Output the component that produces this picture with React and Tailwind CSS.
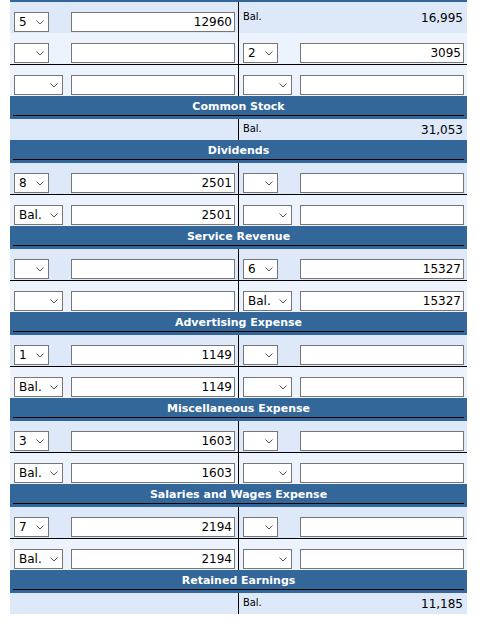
import { useState } from 'react';

const font = "font-['DejaVu_Sans',Verdana,sans-serif]";

const accounts = [
  {
    title: null,
    rows: [
      { left: { sel: '5', val: '12960' }, right: { bal: '16,995' } },
      { left: { sel: '', val: '' }, right: { sel: '2', val: '3095' } },
      { total: true, left: { sel: '', val: '' }, right: { sel: '', val: '' } },
    ],
  },
  { title: 'Common Stock', balance: '31,053' },
  {
    title: 'Dividends',
    rows: [
      { left: { sel: '8', val: '2501' }, right: { sel: '', val: '' } },
      { total: true, left: { sel: 'Bal.', val: '2501' }, right: { sel: '', val: '' } },
    ],
  },
  {
    title: 'Service Revenue',
    rows: [
      { left: { sel: '', val: '' }, right: { sel: '6', val: '15327' } },
      { total: true, left: { sel: '', val: '' }, right: { sel: 'Bal.', val: '15327' } },
    ],
  },
  {
    title: 'Advertising Expense',
    rows: [
      { left: { sel: '1', val: '1149' }, right: { sel: '', val: '' } },
      { total: true, left: { sel: 'Bal.', val: '1149' }, right: { sel: '', val: '' } },
    ],
  },
  {
    title: 'Miscellaneous Expense',
    rows: [
      { left: { sel: '3', val: '1603' }, right: { sel: '', val: '' } },
      { total: true, left: { sel: 'Bal.', val: '1603' }, right: { sel: '', val: '' } },
    ],
  },
  {
    title: 'Salaries and Wages Expense',
    rows: [
      { left: { sel: '7', val: '2194' }, right: { sel: '', val: '' } },
      { total: true, left: { sel: 'Bal.', val: '2194' }, right: { sel: '', val: '' } },
    ],
  },
  { title: 'Retained Earnings', balance: '11,185' },
];

const options = ['', '1', '2', '3', '4', '5', '6', '7', '8', 'Bal.'];

function Picker({ value, wide }) {
  const [selected, setSelected] = useState(value);
  return (
    <div className={`relative h-[20px] ${wide ? 'w-[49px]' : 'w-[35px]'}`}>
      <select
        value={selected}
        onChange={(e) => setSelected(e.target.value)}
        className={`block h-[20px] w-full appearance-none rounded-none border border-[#767676] bg-white py-0 pl-[4px] text-[12px] leading-[18px] text-black outline-none ${font}`}
      >
        {options.map((o) => (
          <option key={o} value={o}>
            {o}
          </option>
        ))}
      </select>
      <svg
        className="pointer-events-none absolute right-[5px] top-[8px]"
        width="8"
        height="5"
        viewBox="0 0 8 5"
      >
        <path d="M0.5 0.5 L4 4 L7.5 0.5" fill="none" stroke="#555" strokeWidth="1" />
      </svg>
    </div>
  );
}

function Amount({ value }) {
  const [text, setText] = useState(value);
  return (
    <input
      value={text}
      onChange={(e) => setText(e.target.value)}
      className={`block h-[20px] w-[164px] rounded-none border border-[#767676] bg-white py-0 pr-[2px] text-right text-[12px] text-black outline-none ${font}`}
    />
  );
}

function Side({ cell, wide, height }) {
  if (cell.bal !== undefined) {
    return (
      <div className={`flex w-[228px] ${height} items-center justify-between pl-[4px] pr-[4px] text-black`}>
        <span className="font-['DejaVu_Sans_Condensed','Liberation_Sans',sans-serif] text-[11px]">
          Bal.
        </span>
        <span className={`text-[12px] ${font}`}>{cell.bal}</span>
      </div>
    );
  }
  if (cell.sel === undefined) {
    return <div className={`w-[228px] ${height}`} />;
  }
  return (
    <div className={`flex w-[228px] ${height} items-end pb-[1px] pl-[4px]`}>
      <div className="w-[57px]">
        <Picker value={cell.sel} wide={wide} />
      </div>
      <Amount value={cell.val} />
    </div>
  );
}

function Row({ row, index }) {
  const shade = index === 0 ? 'bg-[#dde8f8]' : 'bg-[#edf3fc]';
  return (
    <div className={`flex ${shade} ${row.total ? 'border-t border-black' : ''}`}>
      <Side cell={row.left} wide={row.total} height="h-[31px]" />
      <div className="w-px bg-black" />
      <Side cell={row.right} wide={row.total} height="h-[31px]" />
    </div>
  );
}

function Header({ title }) {
  return (
    <div className="bg-[#336699] px-[3px] pb-[3px] pt-[3px]">
      <div
        className={`border-b border-black text-center text-[11px] font-bold leading-[16px] text-white ${font}`}
      >
        {title}
      </div>
    </div>
  );
}

export default function App() {
  return (
    <div className="min-h-[631px] bg-white">
      <div className="ml-[10px] w-[457px]">
        <div className="h-[2px] bg-[#336699]" />
        {accounts.map((account, i) => (
          <div key={i}>
            {account.title && <Header title={account.title} />}
            {account.rows &&
              account.rows.map((row, r) => <Row key={r} row={row} index={r} />)}
            {account.balance && (
              <div className="flex bg-[#dde8f8]">
                <div className="h-[21px] w-[228px]" />
                <div className="w-px bg-black" />
                <Side cell={{ bal: account.balance }} height="h-[21px]" />
              </div>
            )}
          </div>
        ))}
      </div>
    </div>
  );
}
